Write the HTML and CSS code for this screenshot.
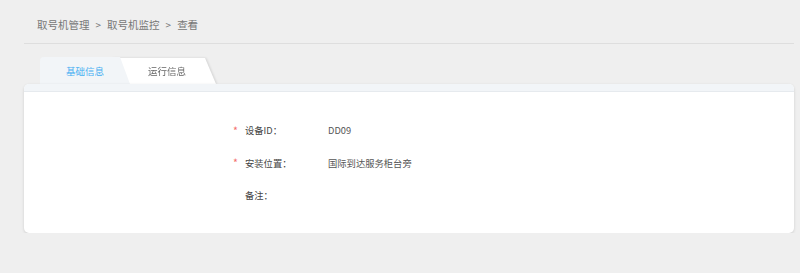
FILE: index.html
```html
<!DOCTYPE html>
<html lang="zh-CN">
<head>
<meta charset="utf-8">
<title>查看</title>
<link rel="stylesheet" href="styles.css">
</head>
<body>
<div class="page">
  <div class="crumbs">
    <span>取号机管理</span><span class="sep">&gt;</span><span>取号机监控</span><span class="sep">&gt;</span><span>查看</span>
  </div>
  <div class="tabs">
    <div class="tab tab-active"><span>基础信息</span></div>
    <div class="tab tab-second"><span>运行信息</span></div>
  </div>
  <div class="card">
    <div class="card-strip"></div>
    <div class="form">
      <div class="row"><span class="req">*</span><span class="label">设备ID：</span><span class="value">DD09</span></div>
      <div class="row"><span class="req">*</span><span class="label">安装位置：</span><span class="value">国际到达服务柜台旁</span></div>
      <div class="row"><span class="req"></span><span class="label">备注：</span><span class="value"></span></div>
    </div>
  </div>
</div>
</body>
</html>
```
FILE: styles.css
```css
html, body {
  margin: 0;
  padding: 0;
  background: #efefef;
  font-family: "Noto Sans CJK SC", "Microsoft YaHei", sans-serif;
}
.page {
  padding: 0 6px 0 24px;
}
.crumbs {
  height: 44px;
  border-bottom: 1px solid #dedede;
  display: flex;
  align-items: center;
  padding-left: 13px;
  padding-top: 6px;
  box-sizing: border-box;
  font-size: 10.5px;
  color: #777;
}
.crumbs .sep {
  margin: 0 6px;
  font-size: 10px;
}
.tabs {
  display: flex;
  align-items: flex-end;
  height: 26px;
  margin-top: 14px;
  padding-left: 16px;
}
.tab {
  height: 27px;
  display: flex;
  align-items: center;
  font-size: 9.5px;
  position: relative;
}
.tab::before {
  content: "";
  position: absolute;
  inset: 0;
  z-index: -1;
}
.tab span {
  position: relative;
}
.tab-active {
  width: 90px;
  z-index: 2;
  color: #45aef2;
  justify-content: center;
}
.tab-active::before {
  background: #f2f5f8;
  border-radius: 4px 0 0 0;
  clip-path: polygon(0 0, 80px 0, 90px 100%, 0 100%);
}
.tab-second {
  width: 104px;
  height: 26px;
  margin-left: -18px;
  z-index: 1;
  color: #666;
  justify-content: center;
  filter: drop-shadow(1px 0 1px rgba(0,0,0,0.12));
}
.tab-second span { left: 3px; }
.tab-second::before {
  background: #ffffff;
  clip-path: polygon(0 0, 93px 0, 104px 100%, 0 100%);
}
.card {
  background: #fff;
  border-radius: 5px;
  height: 149px;
  box-shadow: 0 1px 3px rgba(0,0,0,0.14);
  overflow: hidden;
  position: relative;
  z-index: 3;
}
.card-strip {
  height: 7px;
  background: #f2f5f8;
  border-bottom: 1px solid #e6eaee;
}
.form {
  padding-top: 22px;
  padding-left: 209px;
}
.row {
  display: flex;
  height: 32.5px;
  align-items: center;
  font-size: 9.3px;
}
.req {
  width: 12px;
  color: #f36c6c;
  font-size: 10.5px;
}
.label {
  width: 83px;
  color: #444;
}
.value {
  color: #555;
}
```
